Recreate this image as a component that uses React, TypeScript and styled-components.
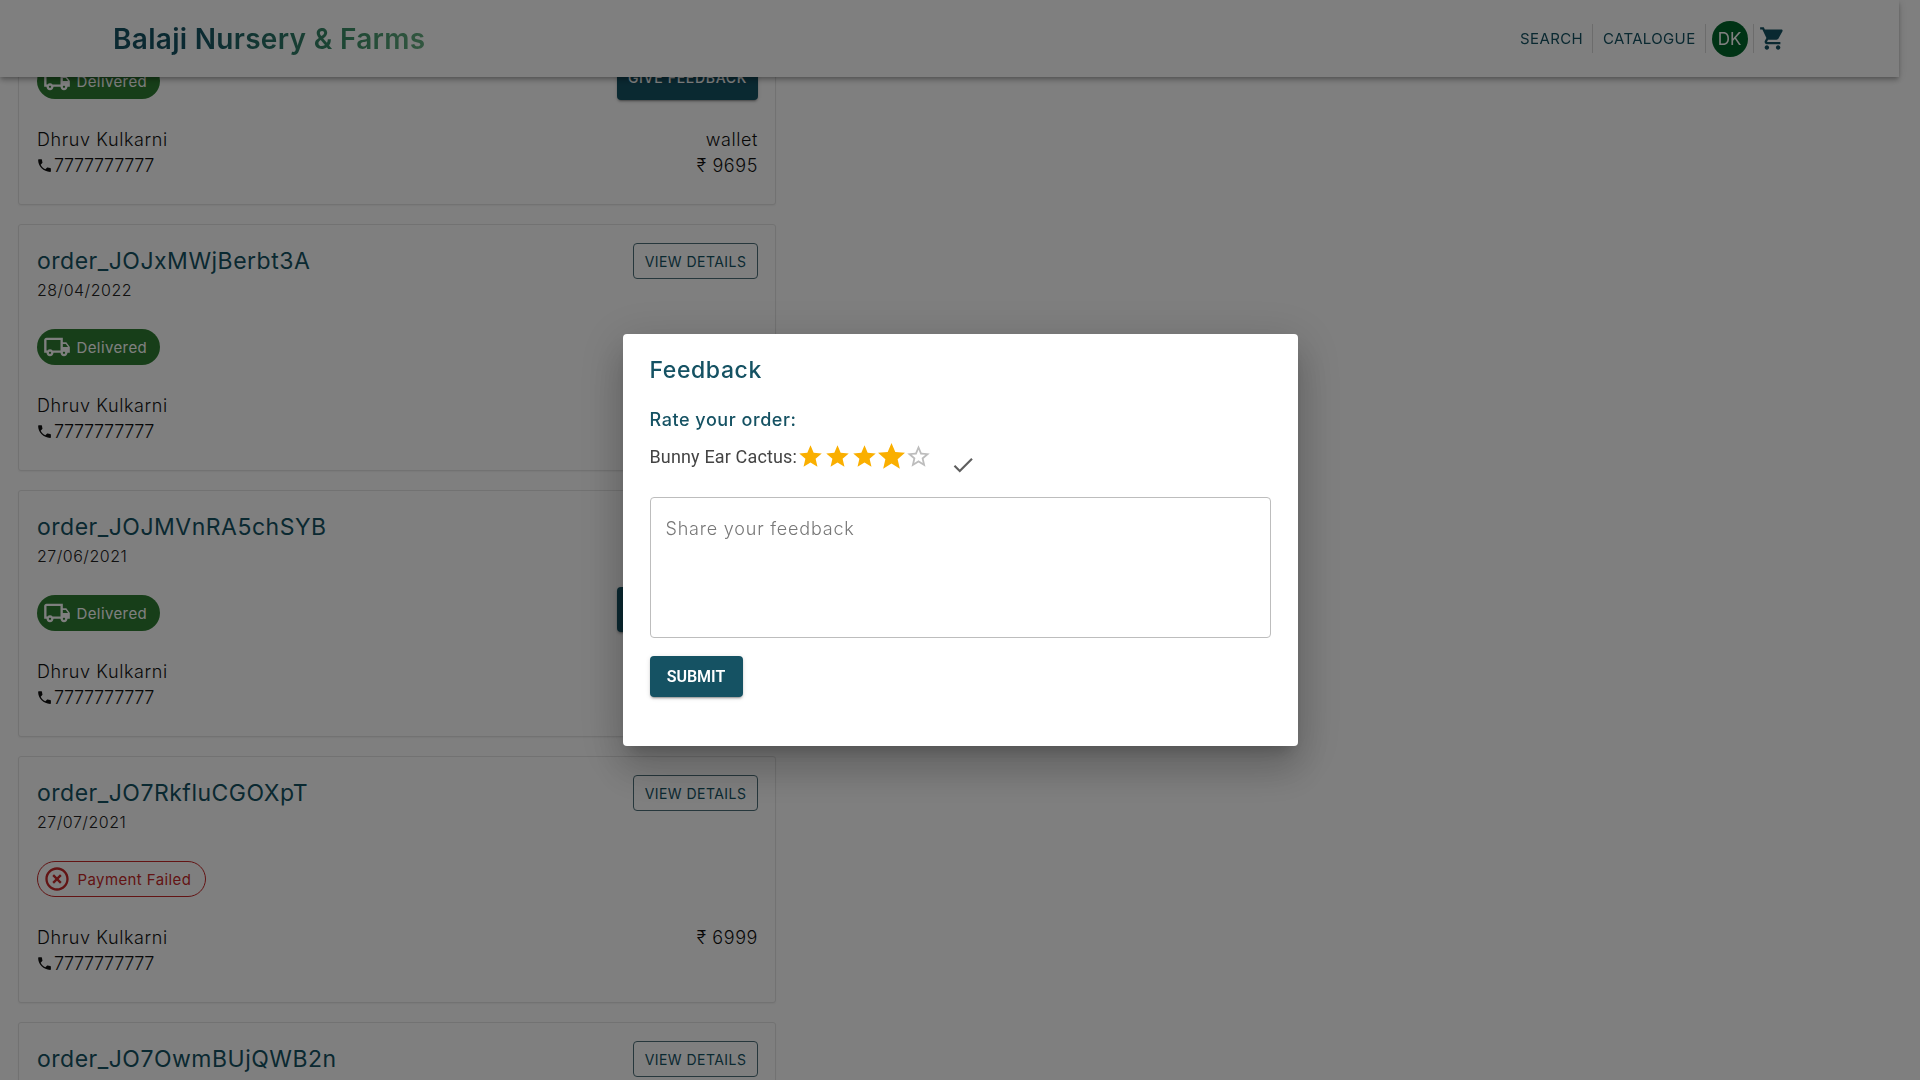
import React from "react";
import styled, { createGlobalStyle } from "styled-components";

const GlobalStyle = createGlobalStyle`
  html, body { margin: 0; padding: 0; height: 100%; overflow: hidden; background: #fff; }
  body { font-family: Inter, "Liberation Sans", sans-serif; }
  * { box-sizing: border-box; }
`;

const Page = styled.div`
  height: 100vh;
  overflow: hidden;
`;

const AppBar = styled.header`
  position: fixed;
  top: 0;
  left: 0;
  z-index: 2;
  width: 1899px;
  height: 77px;
  padding: 0 113px;
  display: flex;
  align-items: center;
  justify-content: space-between;
  background: #fff;
  box-shadow: 0 2px 4px -1px rgba(0,0,0,.2), 0 4px 5px rgba(0,0,0,.14), 0 1px 10px rgba(0,0,0,.12);
`;

const Logo = styled.div`
  font-size: 28px;
  font-weight: 600;
  letter-spacing: 0.3px;
  background: linear-gradient(90deg, #155263 0%, #155263 25%, #3c8f68 75%, #65ad80 100%);
  -webkit-background-clip: text;
  background-clip: text;
  color: transparent;
`;

const Nav = styled.nav`
  display: flex;
  align-items: center;
`;

const NavLink = styled.a`
  font-size: 15px;
  color: #155263;
  padding: 0 9.5px;
  letter-spacing: 0.35px;
  height: 29px;
  line-height: 29px;
  border-right: 1px solid #d9d9d9;
`;

const AvatarWrap = styled.div`
  padding: 0 5.5px;
  height: 29px;
  display: flex;
  align-items: center;
  border-right: 1px solid #d9d9d9;
`;

const Avatar = styled.div`
  width: 36px;
  height: 36px;
  border-radius: 50%;
  background: #00662a;
  color: #fff;
  display: flex;
  align-items: center;
  justify-content: center;
  font-size: 17px;
`;

const CartIcon = styled.svg`
  width: 27px;
  height: 27px;
  margin-left: 5px;
  fill: #155263;
`;

const OrderList = styled.main`
  width: 776px;
  margin-top: -42px;
  padding-left: 18px;
  display: flex;
  flex-direction: column;
  gap: 19px;
`;

const Card = styled.article`
  height: 247px;
  padding: 18px 17px 0 18px;
  background: #fff;
  border: 1px solid #e4e4e4;
  border-radius: 3px;
  box-shadow: 0 1px 2px rgba(0,0,0,.06);
  display: flex;
  flex-direction: column;
`;

const TopRow = styled.div`
  display: flex;
  justify-content: space-between;
  align-items: flex-start;
  height: 76px;
`;

const OrderId = styled.h2`
  margin: 0;
  font-size: 23px;
  line-height: 36px;
  font-weight: 400;
  letter-spacing: 0.5px;
  color: #155263;
`;

const OrderDate = styled.div`
  font-size: 16px;
  font-weight: 300;
  line-height: 22px;
  letter-spacing: 0.5px;
  color: #222;
`;

const OutlineButton = styled.button`
  width: 125px;
  height: 36px;
  padding: 0;
  font-family: inherit;
  font-size: 14px;
  letter-spacing: 0.45px;
  color: #155263;
  background: #fff;
  border: 1px solid #4d6f79;
  border-radius: 4px;
`;

const StatusRow = styled.div`
  display: flex;
  justify-content: space-between;
  align-items: flex-end;
  height: 47px;
`;

const Chip = styled.div<{ $failed?: boolean }>`
  height: 36px;
  margin-bottom: 1px;
  padding: ${(p) => (p.$failed ? "0 13.5px 0 5px" : "0 13px 0 6px")};
  border-radius: 18px;
  display: inline-flex;
  align-items: center;
  gap: ${(p) => (p.$failed ? "6.5px" : "5.5px")};
  font-size: 15px;
  font-weight: 400;
  letter-spacing: 0.4px;
  color: ${(p) => (p.$failed ? "#c62828" : "#fff")};
  background: ${(p) => (p.$failed ? "transparent" : "#2e7d32")};
  border: ${(p) => (p.$failed ? "1px solid #c62828" : "none")};
`;

const ChipIcon = styled.svg`
  width: 28px;
  height: 28px;
  fill: currentColor;
`;

const FilledButton = styled.button`
  width: 141px;
  height: 45px;
  padding: 0;
  font-family: inherit;
  font-size: 14px;
  font-weight: 500;
  letter-spacing: 0.7px;
  color: #fff;
  background: #155263;
  border: none;
  border-radius: 4px;
  box-shadow: 0 3px 1px -2px rgba(0,0,0,.2), 0 2px 2px rgba(0,0,0,.14), 0 1px 5px rgba(0,0,0,.12);
`;

const InfoRow = styled.div`
  margin-top: 27px;
  display: flex;
  justify-content: space-between;
  font-size: 18px;
  font-weight: 300;
  line-height: 25.5px;
  letter-spacing: 0.6px;
  color: #111;
`;

const InfoColumn = styled.div<{ $right?: boolean }>`
  display: flex;
  flex-direction: column;
  text-align: ${(p) => (p.$right ? "right" : "left")};
`;

const PhoneLine = styled.div`
  display: flex;
  align-items: center;
  letter-spacing: -0.4px;
`;

const PhoneIcon = styled.svg`
  width: 17px;
  height: 17px;
  margin-left: -1px;
  margin-right: 1px;
  fill: #111;
`;

const Backdrop = styled.div`
  position: fixed;
  inset: 0;
  z-index: 5;
  background: rgba(0,0,0,.5);
  display: flex;
  align-items: center;
  justify-content: center;
`;

const Modal = styled.section`
  width: 675px;
  height: 412px;
  padding: 20px 27px 0;
  background: #fff;
  border-radius: 4px;
  box-shadow: 0 11px 15px -7px rgba(0,0,0,.2), 0 24px 38px 3px rgba(0,0,0,.14), 0 9px 46px 8px rgba(0,0,0,.12);
`;

const ModalTitle = styled.h3`
  margin: 0;
  font-size: 23px;
  line-height: 32px;
  font-weight: 500;
  letter-spacing: 0.6px;
  color: #155263;
`;

const RateLabel = styled.div`
  margin-top: 21px;
  font-size: 18px;
  line-height: 26px;
  font-weight: 500;
  letter-spacing: 0.55px;
  color: #155263;
`;

const RatingRow = styled.div`
  margin-top: 9px;
  height: 28px;
  display: flex;
  align-items: center;
`;

const ProductName = styled.span`
  font-family: Roboto, sans-serif;
  font-size: 18px;
  letter-spacing: 0.15px;
  color: #444;
`;

const Star = styled.svg<{ $big?: boolean; $empty?: boolean }>`
  width: 27px;
  height: 27px;
  flex: none;
  fill: ${(p) => (p.$empty ? "#bdbdbd" : "#faaf00")};
  transform: ${(p) => (p.$big ? "scale(1.2)" : "none")};
`;

const CheckIcon = styled.svg`
  width: 26px;
  height: 26px;
  margin: 18px 0 0 18px;
  fill: #5f5f5f;
`;

const FeedbackBox = styled.textarea`
  display: block;
  margin-top: 27px;
  width: 621px;
  height: 141px;
  padding: 20px 15px;
  resize: none;
  outline: none;
  font-family: inherit;
  font-size: 18px;
  font-weight: 300;
  letter-spacing: 0.8px;
  border: 1px solid #bdbdbd;
  border-radius: 4px;
  &::placeholder { color: #777; }
`;

const SubmitButton = styled.button`
  display: block;
  margin-top: 18px;
  width: 93px;
  height: 41px;
  padding: 0;
  font-family: Roboto, sans-serif;
  font-size: 16px;
  font-weight: 600;
  color: #fff;
  background: #155263;
  border: none;
  border-radius: 4px;
  box-shadow: 0 3px 1px -2px rgba(0,0,0,.2), 0 2px 2px rgba(0,0,0,.14), 0 1px 5px rgba(0,0,0,.12);
`;

const TRUCK = "M20 8h-3V4H3c-1.1 0-2 .9-2 2v11h2c0 1.66 1.34 3 3 3s3-1.34 3-3h6c0 1.66 1.34 3 3 3s3-1.34 3-3h2v-5l-3-4zm-.5 1.5 1.96 2.5H17V9.5h2.5zM6 18c-.55 0-1-.45-1-1s.45-1 1-1 1 .45 1 1-.45 1-1 1zm2.22-3c-.55-.61-1.33-1-2.22-1s-1.67.39-2.22 1H3V6h12v9H8.22zM18 18c-.55 0-1-.45-1-1s.45-1 1-1 1 .45 1 1-.45 1-1 1z";
const CROSS = "M14.59 8 12 10.59 9.41 8 8 9.41 10.59 12 8 14.59 9.41 16 12 13.41 14.59 16 16 14.59 13.41 12 16 9.41 14.59 8zM12 2C6.47 2 2 6.47 2 12s4.47 10 10 10 10-4.47 10-10S17.53 2 12 2zm0 18c-4.41 0-8-3.59-8-8s3.59-8 8-8 8 3.59 8 8-3.59 8-8 8z";
const PHONE = "M6.62 10.79c1.44 2.83 3.76 5.14 6.59 6.59l2.2-2.2c.27-.27.67-.36 1.02-.24 1.12.37 2.33.57 3.57.57.55 0 1 .45 1 1V20c0 .55-.45 1-1 1-9.39 0-17-7.61-17-17 0-.55.45-1 1-1h3.5c.55 0 1 .45 1 1 0 1.25.2 2.45.57 3.57.11.35.03.74-.25 1.02l-2.2 2.2z";
const CART = "M7 18c-1.1 0-1.99.9-1.99 2S5.9 22 7 22s2-.9 2-2-.9-2-2-2zM1 2v2h2l3.6 7.59-1.35 2.45c-.16.28-.25.61-.25.96 0 1.1.9 2 2 2h12v-2H7.42c-.14 0-.25-.11-.25-.25l.03-.12.9-1.63h7.45c.75 0 1.41-.41 1.75-1.03l3.58-6.47c.08-.15.12-.33.12-.5 0-.55-.45-1-1-1H5.21l-.94-2H1zm16 16c-1.1 0-1.99.9-1.99 2s.89 2 1.99 2 2-.9 2-2-.9-2-2-2z";
const STAR = "M12 17.27L18.18 21l-1.64-7.03L22 9.24l-7.19-.61L12 2 9.19 8.63 2 9.24l5.46 4.73L5.82 21z";
const STAR_EMPTY = "M22 9.24l-7.19-.62L12 2 9.19 8.63 2 9.24l5.46 4.73L5.82 21 12 17.27 18.18 21l-1.63-7.03L22 9.24zM12 15.4l-3.76 2.27 1-4.28-3.32-2.88 4.38-.38L12 6.1l1.71 4.04 4.38.38-3.32 2.88 1 4.28L12 15.4z";
const CHECK = "M9 16.17L4.83 12l-1.42 1.41L9 19 21 7l-1.41-1.41z";

type Order = {
  id: string;
  date: string;
  failed?: boolean;
  feedback?: boolean;
  method?: string;
  amount: string;
};

const orders: Order[] = [
  { id: "order_JOKtHvQWbRa1Zc", date: "02/05/2022", feedback: true, method: "wallet", amount: "9695" },
  { id: "order_JOJxMWjBerbt3A", date: "28/04/2022", method: "wallet", amount: "5499" },
  { id: "order_JOJMVnRA5chSYB", date: "27/06/2021", feedback: true, method: "wallet", amount: "3299" },
  { id: "order_JO7RkfluCGOXpT", date: "27/07/2021", failed: true, amount: "6999" },
  { id: "order_JO7OwmBUjQWB2n", date: "27/07/2021", failed: true, amount: "6999" },
];

const OrderCard = ({ order }: { order: Order }) => (
  <Card>
    <TopRow>
      <div>
        <OrderId>{order.id}</OrderId>
        <OrderDate>{order.date}</OrderDate>
      </div>
      {order.id !== orders[0].id && <OutlineButton>VIEW DETAILS</OutlineButton>}
    </TopRow>
    <StatusRow>
      <Chip $failed={order.failed}>
        <ChipIcon viewBox="0 0 24 24"><path d={order.failed ? CROSS : TRUCK} /></ChipIcon>
        {order.failed ? "Payment Failed" : "Delivered"}
      </Chip>
      {order.feedback && <FilledButton>GIVE FEEDBACK</FilledButton>}
    </StatusRow>
    <InfoRow>
      <InfoColumn>
        <div>Dhruv Kulkarni</div>
        <PhoneLine>
          <PhoneIcon viewBox="0 0 24 24"><path d={PHONE} /></PhoneIcon>
          7777777777
        </PhoneLine>
      </InfoColumn>
      <InfoColumn $right>
        {order.method && <div>{order.method}</div>}
        <div>₹ {order.amount}</div>
      </InfoColumn>
    </InfoRow>
  </Card>
);

export default function App() {
  return (
    <Page>
      <GlobalStyle />
      <AppBar>
        <Logo>Balaji Nursery &amp; Farms</Logo>
        <Nav>
          <NavLink>SEARCH</NavLink>
          <NavLink>CATALOGUE</NavLink>
          <AvatarWrap><Avatar>DK</Avatar></AvatarWrap>
          <CartIcon viewBox="0 0 24 24"><path d={CART} /></CartIcon>
        </Nav>
      </AppBar>
      <OrderList>
        {orders.map((o) => <OrderCard key={o.id} order={o} />)}
      </OrderList>
      <Backdrop>
        <Modal>
          <ModalTitle>Feedback</ModalTitle>
          <RateLabel>Rate your order:</RateLabel>
          <RatingRow>
            <ProductName>Bunny Ear Cactus:</ProductName>
            {[0, 1, 2, 3, 4].map((i) => (
              <Star key={i} viewBox="0 0 24 24" $big={i === 3} $empty={i === 4}>
                <path d={i === 4 ? STAR_EMPTY : STAR} />
              </Star>
            ))}
            <CheckIcon viewBox="0 0 24 24"><path d={CHECK} /></CheckIcon>
          </RatingRow>
          <FeedbackBox placeholder="Share your feedback" />
          <SubmitButton>SUBMIT</SubmitButton>
        </Modal>
      </Backdrop>
    </Page>
  );
}
